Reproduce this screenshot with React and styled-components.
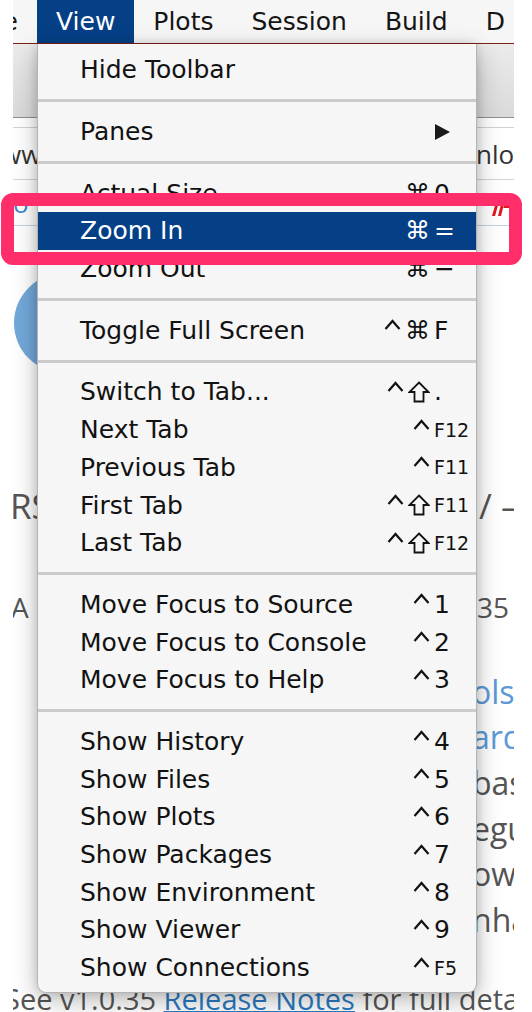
import React from "react"
import styled, { createGlobalStyle } from "styled-components"

const SYS = `"DejaVu Sans", "Liberation Sans", sans-serif`
const WEB = `"Open Sans", "Liberation Sans", sans-serif`

const GlobalStyle = createGlobalStyle`
  html, body {
    margin: 0;
    padding: 0;
    background: #ffffff;
  }
`

const Page = styled.div`
  position: relative;
  width: 532px;
  height: 1012px;
  overflow: hidden;
  background: #ffffff;
`

// the browser window behind the menu
const Screen = styled.div`
  margin-left: 13px;
  width: 501px;
  height: 1012px;
  overflow: hidden;
  display: flex;
  flex-direction: column;
  background: #ffffff;
`

const MenuBar = styled.div`
  flex: 0 0 43px;
  display: flex;
  align-items: stretch;
  background: #f6f6f6;
  border-bottom: 1px solid #7d2019;
  font-family: ${SYS};
  font-size: 25px;
  white-space: nowrap;
  overflow: hidden;
`

const BarLead = styled.div`
  flex: none;
  width: 24px;
  min-width: 0;
  display: flex;
  justify-content: flex-end;
`

const BarTail = styled.div`
  flex: none;
  width: 38px;
  overflow: hidden;
  display: flex;
`

const BarItem = styled.div`
  flex-shrink: 0;
  display: flex;
  align-items: center;
  padding: 0 19px;
  color: ${props => props.$active ? '#ffffff' : '#151515'};
  background: ${props => props.$active ? '#053f86' : 'transparent'};
`

const Toolbar = styled.div`
  flex: 0 0 73px;
  background: linear-gradient(#ebebeb, #dadada);
  border-bottom: 1px solid #8e8e8e;
`

const ToolbarGap = styled.div`
  flex: 0 0 9px;
  border-bottom: 1px solid #d2d2d2;
`

const EdgeRow = styled.div`
  flex: 0 0 ${props => props.$h}px;
  margin-top: ${props => props.$mt || 0}px;
  display: grid;
  grid-template-columns: 463px 1fr;
  align-items: center;
  font-family: ${WEB};
  font-size: ${props => props.$size}px;
  line-height: 1;
  color: ${props => props.$color || '#555555'};
  border-bottom: ${props => props.$rule ? `1px solid ${props.$rule}` : 'none'};
  white-space: nowrap;
  overflow: hidden;
`

const Lead = styled.span`
  overflow: hidden;
  margin-left: ${props => props.$shift || 0}px;
  color: ${props => props.$link ? '#3f86cc' : 'inherit'};
`

const Tail = styled.span`
  margin-left: ${props => props.$shift ?? -4}px;
  color: ${props => props.$link ? '#5b9ad6' : 'inherit'};
`

const Hero = styled.div`
  flex: 0 0 254px;
  box-sizing: border-box;
  padding: 47px 0 0 1px;
`

const Logo = styled.div`
  width: 100px;
  height: 100px;
  border-radius: 50%;
  background: #72a8d9;
  color: #ffffff;
  display: flex;
  align-items: center;
  justify-content: center;
  font: 700 62px ${WEB};
`

const Footer = styled.div`
  margin-top: ${props => props.$mt}px;
  margin-left: -9px;
  font-family: ${WEB};
  font-size: 29px;
  line-height: 44px;
  color: #555555;
  white-space: nowrap;
`

const FooterLink = styled.span`
  color: #2a7ac0;
  text-decoration: underline;
  text-decoration-thickness: 1px;
`

// the View dropdown
const Menu = styled.div`
  position: absolute;
  left: 37px;
  top: 44px;
  width: 440px;
  box-sizing: border-box;
  background: #f6f6f6;
  border: 1px solid #b4b4b4;
  border-top: none;
  border-radius: 0 0 9px 9px;
  box-shadow: 0 8px 26px rgba(0, 0, 0, 0.26), 0 0 10px rgba(0, 0, 0, 0.14);
  font-family: ${SYS};
  font-size: 25px;
  color: #121212;
`

const Group = styled.div`
  padding-top: ${props => props.$top ?? 10.5}px;
  padding-bottom: ${props => props.$bottom ?? 10.5}px;
`

const Separator = styled.div`
  height: 3px;
  background: #cbcbcb;
`

const Row = styled.div`
  display: grid;
  grid-template-columns: 1fr auto 43px;
  align-items: center;
  height: 37.7px;
  padding-left: 42px;
  white-space: nowrap;
  color: ${props => props.$active ? '#ffffff' : '#121212'};
  background: ${props => props.$active ? '#053f86' : 'transparent'};
`

const Mods = styled.span`
  display: inline-flex;
  align-items: center;
  justify-content: flex-end;
  gap: 4px;
  padding-right: 3px;
`

const Key = styled.span`
  font-size: ${props => props.$small ? 19 : 25}px;
  padding-left: 1px;
  display: flex;
  align-items: center;
`

const Callout = styled.div`
  position: absolute;
  left: 1px;
  top: 193px;
  width: 521px;
  height: 72px;
  box-sizing: border-box;
  border: 13px solid #ff2e6b;
  border-radius: 12px;
  pointer-events: none;
`

const groups = [
  [{ label: 'Hide Toolbar' }],
  [{ label: 'Panes', submenu: true }],
  [
    { label: 'Actual Size', mods: ['cmd'], key: '0' },
    { label: 'Zoom In', mods: ['cmd'], key: '=', active: true },
    { label: 'Zoom Out', mods: ['cmd'], key: '−' },
  ],
  [{ label: 'Toggle Full Screen', mods: ['ctrl', 'cmd'], key: 'F' }],
  [
    { label: 'Switch to Tab...', mods: ['ctrl', 'shift'], key: '.' },
    { label: 'Next Tab', mods: ['ctrl'], key: 'F12', small: true },
    { label: 'Previous Tab', mods: ['ctrl'], key: 'F11', small: true },
    { label: 'First Tab', mods: ['ctrl', 'shift'], key: 'F11', small: true },
    { label: 'Last Tab', mods: ['ctrl', 'shift'], key: 'F12', small: true },
  ],
  [
    { label: 'Move Focus to Source', mods: ['ctrl'], key: '1' },
    { label: 'Move Focus to Console', mods: ['ctrl'], key: '2' },
    { label: 'Move Focus to Help', mods: ['ctrl'], key: '3' },
  ],
  [
    { label: 'Show History', mods: ['ctrl'], key: '4' },
    { label: 'Show Files', mods: ['ctrl'], key: '5' },
    { label: 'Show Plots', mods: ['ctrl'], key: '6' },
    { label: 'Show Packages', mods: ['ctrl'], key: '7' },
    { label: 'Show Environment', mods: ['ctrl'], key: '8' },
    { label: 'Show Viewer', mods: ['ctrl'], key: '9' },
    { label: 'Show Connections', mods: ['ctrl'], key: 'F5', small: true },
  ],
]

const CtrlIcon = () => (
  <svg width="17" height="22" viewBox="0 0 17 22">
    <polyline points="1.5,10 8.5,2 15.5,10" fill="none" stroke="currentColor" strokeWidth="2.2" />
  </svg>
)

const ShiftIcon = () => (
  <svg width="22" height="22" viewBox="0 0 22 22">
    <path d="M11 1.5 L20.5 11 L15.5 11 L15.5 20.5 L6.5 20.5 L6.5 11 L1.5 11 Z" fill="none" stroke="currentColor" strokeWidth="1.8" strokeLinejoin="miter" />
  </svg>
)

const modGlyph = (m, i) => {
  if (m === 'ctrl') return <CtrlIcon key={i} />
  if (m === 'shift') return <ShiftIcon key={i} />
  return <span key={i}>⌘</span>
}

const SubArrow = () => (
  <svg width="17" height="16" viewBox="0 0 17 16">
    <polygon points="1,0 16,8 1,16" fill="#1a1a1a" />
  </svg>
)

const RedMark = () => (
  <svg width="20" height="20" viewBox="0 0 20 20" style={{ marginLeft: 14, marginTop: 6 }}>
    <polygon points="2,20 6,6 9,6 5,20" fill="#e3161d" />
    <polygon points="8,20 12,4 15,4 11,20" fill="#e3161d" />
    <polygon points="13,12 19,2 19,12" fill="#e3161d" />
  </svg>
)

const rightLines = [
  { text: 'ols', link: true },
  { text: 'ard', link: true },
  { text: 'bas' },
  { text: 'egu' },
  { text: 'own' },
  { text: 'nha' },
]

export default function App() {
  return (
    <Page>
      <GlobalStyle />
      <Screen>
        <MenuBar>
          <BarLead>
            <BarItem>Code</BarItem>
          </BarLead>
          <BarItem $active>View</BarItem>
          <BarItem>Plots</BarItem>
          <BarItem>Session</BarItem>
          <BarItem>Build</BarItem>
          <BarTail>
            <BarItem>Debug</BarItem>
          </BarTail>
        </MenuBar>
        <Toolbar />
        <ToolbarGap />
        <EdgeRow $h={51} $size={26} $color="#333333" $rule="#d4d4d4">
          <Lead $shift={-12}>www.rstudio.com/products/rstudio/download</Lead>
          <Tail $shift={0}>nload</Tail>
        </EdgeRow>
        <EdgeRow $h={45} $size={26} $rule="#c3d0de">
          <Lead $link>o</Lead>
          <RedMark />
        </EdgeRow>
        <Hero>
          <Logo>R</Logo>
        </Hero>
        <EdgeRow $h={50} $size={35}>
          <Lead $shift={-3}>RStudio v1.0.35</Lead>
          <Tail $shift={3}>/ –</Tail>
        </EdgeRow>
        <EdgeRow $h={44} $mt={55} $size={28}>
          <Lead $shift={-2}>A preview release of RStudio v1.0.35</Lead>
          <Tail $shift={1}>35</Tail>
        </EdgeRow>
        {rightLines.map((line, i) => (
          <EdgeRow key={i} $h={45.6} $mt={i === 0 ? 40 : 0} $size={32}>
            <Lead />
            <Tail $link={line.link}>{line.text}</Tail>
          </EdgeRow>
        ))}
        <Footer $mt={34}>
          See v1.0.35 <FooterLink>Release Notes</FooterLink> for full details.
        </Footer>
      </Screen>

      <Menu>
        {groups.map((items, gi) => (
          <React.Fragment key={gi}>
            {gi > 0 && <Separator />}
            <Group
              $top={gi === 0 ? 7 : undefined}
              $bottom={gi === groups.length - 1 ? 6 : undefined}
            >
              {items.map(item => (
                <Row key={item.label} $active={item.active}>
                  <span>{item.label}</span>
                  <Mods>{(item.mods || []).map(modGlyph)}</Mods>
                  <Key $small={item.small}>
                    {item.submenu ? <SubArrow /> : item.key}
                  </Key>
                </Row>
              ))}
            </Group>
          </React.Fragment>
        ))}
      </Menu>

      <Callout />
    </Page>
  )
}
